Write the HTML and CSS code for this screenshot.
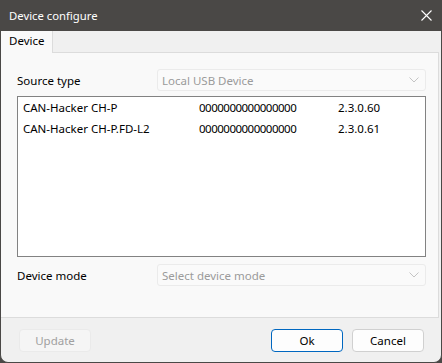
FILE: index.html
```html
<!DOCTYPE html>
<html>
<head>
<meta charset="utf-8">
<link rel="stylesheet" href="styles.css">
</head>
<body>
<div class="window">
  <div class="titlebar">
    <span class="title">Device configure</span>
    <svg class="close" width="11" height="11" viewBox="0 0 11 11"><path d="M0.5 0.5L10.5 10.5M10.5 0.5L0.5 10.5" stroke="#fff" stroke-width="1.1" fill="none"/></svg>
  </div>
  <div class="tabbar">
    <div class="tab">Device</div>
  </div>
  <div class="panel">
    <div class="field">
      <span class="label">Source type</span>
      <div class="combo"><span>Local USB Device</span><svg width="10" height="6" viewBox="0 0 10 6"><path d="M0.5 0.5L5 5L9.5 0.5" stroke="#c4c4c4" fill="none"/></svg></div>
    </div>
    <div class="list">
      <div class="row"><span class="c1">CAN-Hacker CH-P</span><span class="c2">0000000000000000</span><span class="c3">2.3.0.60</span></div>
      <div class="row"><span class="c1">CAN-Hacker CH-P.FD-L2</span><span class="c2">0000000000000000</span><span class="c3">2.3.0.61</span></div>
    </div>
    <div class="field mode">
      <span class="label">Device mode</span>
      <div class="combo"><span>Select device mode</span><svg width="10" height="6" viewBox="0 0 10 6"><path d="M0.5 0.5L5 5L9.5 0.5" stroke="#c4c4c4" fill="none"/></svg></div>
    </div>
  </div>
  <div class="footer">
    <button class="btn disabled">Update</button>
    <div class="spacer"></div>
    <button class="btn primary">Ok</button>
    <button class="btn">Cancel</button>
  </div>
</div>
</body>
</html>
```
FILE: styles.css
```css
* { box-sizing: border-box; }
html, body { margin: 0; padding: 0; }
body {
  width: 442px; height: 363px;
  font-family: "Noto Sans", "Open Sans", sans-serif;
  font-size: 11.5px;
  background: #4a4846;
}
.window {
  width: 442px; height: 363px;
  background: #f0f0f0;
  border: 1px solid #4a4846;
  border-top: none;
  border-radius: 0 0 8px 8px;
  display: flex; flex-direction: column;
  overflow: hidden;
}
.titlebar {
  height: 31px;
  background: #4a4846;
  color: #ffffff;
  display: flex; align-items: center;
  padding: 0 10px 0 9px;
  flex: none;
  margin: 0 -1px;
}
.title { font-size: 11.3px; flex: 1; }
.tabbar {
  height: 22px; flex: none;
  display: flex;
  border-bottom: 1px solid #dcdcdc;
  margin-right: 2px;
}
.tab {
  width: 52px;
  background: #f9f9f9;
  border-right: 1px solid #dcdcdc;
  padding: 2px 0 0 8px;
  color: #000;
  margin-bottom: -1px;
}
.panel {
  height: 265px; flex: none;
  background: #f9f9f9;
  border-right: 1px solid #dcdcdc;
  border-bottom: 1px solid #dcdcdc;
  margin-right: 2px;
  padding: 16px 12px 0 16px;
  display: flex; flex-direction: column;
}
.field { display: flex; align-items: center; height: 22px; }
.label { width: 140px; color: #000; }
.combo {
  flex: 1; height: 22px;
  border: 1px solid #ebebeb;
  border-radius: 3px;
  background: #fafafa;
  color: #9b9b9b;
  display: flex; align-items: center; justify-content: space-between;
  padding: 0 6px 0 4px;
}
.list {
  margin-top: 5px;
  height: 161px;
  border: 1px solid #828282;
  background: #fff;
  padding: 0 0 0 5px;
}
.row { display: flex; height: 21px; align-items: center; color: #000; }
.c1 { width: 176px; }
.c2 { width: 139px; letter-spacing: -0.5px; }
.mode { margin-top: 7px; }
.footer {
  flex: 1;
  display: flex; align-items: flex-start;
  padding: 11px 17px 0 18px;
}
.spacer { flex: 1; }
.btn {
  font-family: inherit; font-size: 11.5px;
  width: 72px; height: 23px;
  border: 1px solid #d0d0d0;
  border-radius: 4px;
  background: #fdfdfd;
  color: #000;
  padding: 0;
}
.btn.disabled { background: #f5f5f5; border-color: #eaeaea; color: #a0a0a0; }
.btn.primary { border-color: #0067c0; margin-right: 9px; }
```
